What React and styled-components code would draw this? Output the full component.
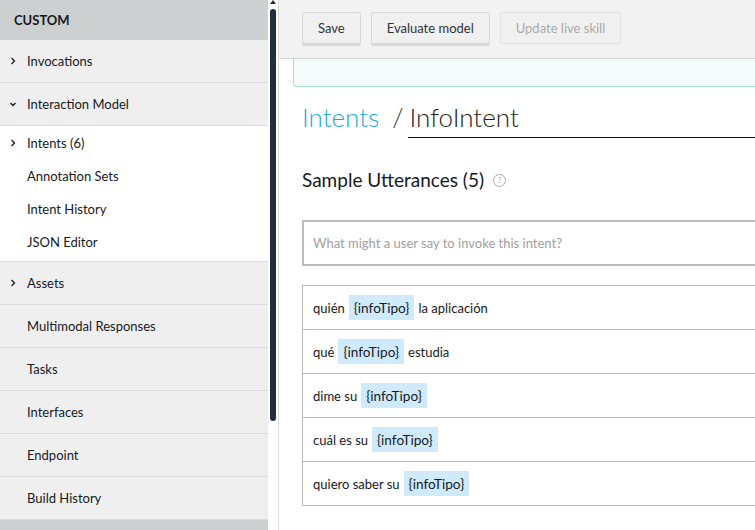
import React from 'react';
import styled, { createGlobalStyle } from 'styled-components';

const GlobalStyle = createGlobalStyle`
  html, body {
    margin: 0;
    padding: 0;
    background: #fff;
  }
  body {
    font-family: Lato, "Liberation Sans", sans-serif;
    color: #16191f;
  }
`;

const Page = styled.div`
  display: flex;
  width: 755px;
  height: 530px;
  overflow: hidden;
`;

const Sidebar = styled.nav`
  width: 268px;
  flex-shrink: 0;
  display: flex;
  flex-direction: column;
  background: #efefef;
`;

const SidebarHeader = styled.div`
  height: 40px;
  flex-shrink: 0;
  display: flex;
  align-items: center;
  padding-left: 14px;
  background: #ccd0d0;
  font-size: 13px;
  font-weight: 700;
`;

const NavRow = styled.div`
  height: 42px;
  flex-shrink: 0;
  display: flex;
  align-items: center;
  border-bottom: 1px solid #dcdcdc;
  font-size: 13px;
`;

const SubGroup = styled.div`
  background: #fff;
  padding: 0 0 3px;
  border-bottom: 1px solid #dcdcdc;
`;

const SubRow = styled.div`
  height: 33px;
  display: flex;
  align-items: center;
  font-size: 13px;
`;

const Chevron = styled.span`
  width: 27px;
  flex-shrink: 0;
  display: flex;
  justify-content: center;
  padding-right: 2px;
  box-sizing: border-box;
`;

const SidebarFooter = styled.div`
  flex: 1;
  background: #ccd0d0;
`;

const ScrollTrack = styled.div`
  width: 10px;
  flex-shrink: 0;
  position: relative;
  background: #fff;
  border-right: 1px solid #dcdcdc;
`;

const ScrollArrow = styled.div`
  position: absolute;
  left: 2px;
  top: 0;
  width: 0;
  height: 0;
  border-left: 3px solid transparent;
  border-right: 3px solid transparent;
  border-bottom: 4px solid #232f3e;
`;

const ScrollThumb = styled.div`
  position: absolute;
  left: 2px;
  top: 9px;
  width: 6px;
  height: 412px;
  border-radius: 3px;
  background: #232f3e;
`;

const Main = styled.main`
  flex: 1;
  min-width: 0;
  display: flex;
  flex-direction: column;
`;

const Toolbar = styled.div`
  height: 59px;
  flex-shrink: 0;
  display: flex;
  align-items: flex-start;
  gap: 10px;
  padding: 12px 0 0 23px;
  box-sizing: border-box;
  background: #f2f2f2;
  border-bottom: 1px solid #d6d6d6;
`;

const Button = styled.button`
  height: 32px;
  padding: 0 ${p => p.$pad || 15}px;
  font-family: inherit;
  font-size: 13px;
  color: ${p => (p.disabled ? '#aaaaaa' : '#333')};
  background: #f0f0f0;
  border: 1px solid ${p => (p.disabled ? '#e2e2e2' : '#d8d8d8')};
  border-radius: 2px;
  box-shadow: ${p => (p.disabled ? 'none' : '0 2px 0 #dadada')};
`;

const Banner = styled.div`
  height: 27px;
  flex-shrink: 0;
  margin-left: 14px;
  background: #f5fbfb;
  border-left: 1px solid #a6e3cf;
  border-bottom: 1px solid #a6e3cf;
  border-bottom-left-radius: 4px;
`;

const Content = styled.div`
  padding-left: 23px;
  display: flex;
  flex-direction: column;
`;

const TitleRow = styled.h1`
  margin: 13px 0 0;
  display: flex;
  align-items: baseline;
  font-size: 26px;
  font-weight: 300;
  line-height: 34px;
`;

const Crumb = styled.span`
  color: #1ba9d8;
`;

const Slash = styled.span`
  margin: 0 4px 0 13px;
  color: #333;
`;

const NameField = styled.span`
  flex: 1;
  padding: 0 0 3px 2px;
  color: #222;
  border-bottom: 1px solid #16191f;
`;

const SectionTitle = styled.h2`
  margin: 30px 0 0;
  display: flex;
  align-items: center;
  gap: 9px;
  font-size: 19px;
  font-weight: 400;
  line-height: 24px;
`;

const HelpIcon = styled.span`
  width: 11px;
  height: 11px;
  border: 1px solid #aaa;
  border-radius: 50%;
  color: #aaa;
  font-size: 8px;
  line-height: 11px;
  text-align: center;
`;

const UtteranceInput = styled.div`
  margin-top: 28px;
  height: 46px;
  display: flex;
  align-items: center;
  padding-left: 9px;
  border: 2px solid #bcbcbc;
  border-right: none;
  box-sizing: border-box;
  color: #a0a0a0;
  font-size: 13px;
`;

const List = styled.div`
  margin-top: 19px;
  border: 1px solid #b9b9bd;
  border-right: none;
`;

const Utterance = styled.div`
  height: 43px;
  display: flex;
  align-items: center;
  gap: 4px;
  padding-left: 10px;
  font-size: 13px;
  & + & {
    border-top: 1px solid #b9b9bd;
  }
`;

const Slot = styled.span`
  height: 25px;
  display: flex;
  align-items: center;
  padding: 0 5px;
  background: #cfeafc;
  color: #16191f;
  font-size: 13.6px;
`;

const ChevronRight = () => (
  <svg width="8" height="8" viewBox="0 0 8 8">
    <path d="M2.5 1 L5.5 4 L2.5 7" fill="none" stroke="#16191f" strokeWidth="1.3" />
  </svg>
);

const ChevronDown = () => (
  <svg width="8" height="8" viewBox="0 0 8 8">
    <path d="M1.5 3 L4 5.5 L6.5 3" fill="none" stroke="#16191f" strokeWidth="1.3" />
  </svg>
);

const utterances = [
  ['quién', 'la aplicación'],
  ['qué', 'estudia'],
  ['dime su', ''],
  ['cuál es su', ''],
  ['quiero saber su', ''],
];

const mainNav = ['Multimodal Responses', 'Tasks', 'Interfaces', 'Endpoint', 'Build History'];

export default function App() {
  return (
    <>
      <GlobalStyle />
      <Page>
        <Sidebar>
          <SidebarHeader>CUSTOM</SidebarHeader>
          <NavRow>
            <Chevron><ChevronRight /></Chevron>Invocations
          </NavRow>
          <NavRow>
            <Chevron><ChevronDown /></Chevron>Interaction Model
          </NavRow>
          <SubGroup>
            <SubRow>
              <Chevron><ChevronRight /></Chevron>Intents (6)
            </SubRow>
            <SubRow><Chevron />Annotation Sets</SubRow>
            <SubRow><Chevron />Intent History</SubRow>
            <SubRow><Chevron />JSON Editor</SubRow>
          </SubGroup>
          <NavRow>
            <Chevron><ChevronRight /></Chevron>Assets
          </NavRow>
          {mainNav.map(label => (
            <NavRow key={label}>
              <Chevron />
              {label}
            </NavRow>
          ))}
          <SidebarFooter />
        </Sidebar>
        <ScrollTrack>
          <ScrollArrow />
          <ScrollThumb />
        </ScrollTrack>
        <Main>
          <Toolbar>
            <Button>Save</Button>
            <Button>Evaluate model</Button>
            <Button disabled>Update live skill</Button>
          </Toolbar>
          <Banner />
          <Content>
            <TitleRow>
              <Crumb>Intents</Crumb>
              <Slash>/</Slash>
              <NameField>InfoIntent</NameField>
            </TitleRow>
            <SectionTitle>
              Sample Utterances (5)
              <HelpIcon>?</HelpIcon>
            </SectionTitle>
            <UtteranceInput>What might a user say to invoke this intent?</UtteranceInput>
            <List>
              {utterances.map(([before, after]) => (
                <Utterance key={before}>
                  {before}
                  <Slot>{'{infoTipo}'}</Slot>
                  {after}
                </Utterance>
              ))}
            </List>
          </Content>
        </Main>
      </Page>
    </>
  );
}
